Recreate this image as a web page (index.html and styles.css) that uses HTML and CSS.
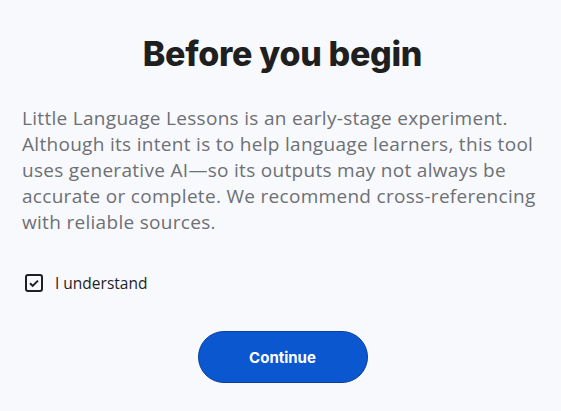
FILE: index.html
```html
<!DOCTYPE html>
<html lang="en">
<head>
    <meta charset="UTF-8">
    <meta name="viewport" content="width=device-width, initial-scale=1.0">
    <title>Before you begin</title>
    <link rel="stylesheet" href="styles.css">
</head>
<body>
    <div class="dialog">
        <h1 class="title">Before you begin</h1>
        <p class="notice">
            Little Language Lessons is an early-stage experiment.<br>
            Although its intent is to help language learners, this tool<br>
            uses generative AI&mdash;so its outputs may not always be<br>
            accurate or complete. We recommend cross-referencing<br>
            with reliable sources.
        </p>
        <label class="agree">
            <span class="box">
                <svg width="18" height="18" viewBox="0 0 18 18">
                    <rect x="1" y="1" width="16" height="16" rx="2" fill="none" stroke="#1f1f1f" stroke-width="2"/>
                    <path d="M5 9.2l2.7 2.7L13 6.6" fill="none" stroke="#1f1f1f" stroke-width="2"/>
                </svg>
            </span>
            <span>I understand</span>
        </label>
        <div class="actions">
            <button class="continue">Continue</button>
        </div>
    </div>
</body>
</html>
```

FILE: styles.css
```css
body {
    margin: 0;
    background: #f8f9fc;
    font-family: "Open Sans", "Noto Sans", sans-serif;
}

.dialog {
    padding: 34px 18px 20px 22px;
}

.title {
    margin: 0;
    text-align: center;
    font-family: Inter, sans-serif;
    font-weight: 800;
    font-size: 34px;
    line-height: 40px;
    letter-spacing: -0.3px;
    color: #1f1f1f;
}

.notice {
    margin: 31px 0 0;
    font-size: 19px;
    line-height: 26px;
    letter-spacing: 0.3px;
    color: #6d7075;
}

.agree {
    display: flex;
    align-items: center;
    gap: 12px;
    height: 18px;
    margin-top: 39px;
    padding-left: 3px;
    font-size: 15.5px;
    color: #1f1f1f;
}

.box {
    display: flex;
}

.actions {
    display: flex;
    justify-content: center;
    margin-top: 39px;
}

.continue {
    width: 170px;
    height: 52px;
    border: 1px solid #0b3f9e;
    border-radius: 26px;
    background: #0b57d0;
    color: #fff;
    font-family: Inter, sans-serif;
    font-weight: 700;
    font-size: 15px;
}
```
